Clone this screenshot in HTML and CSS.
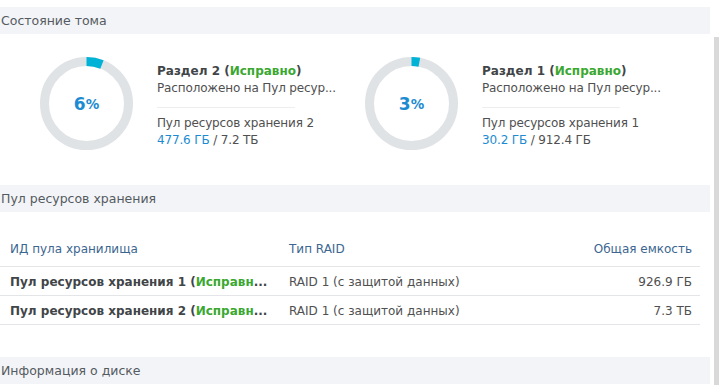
FILE: index.html
```html
<!DOCTYPE html>
<html lang="ru">
<head>
<meta charset="utf-8">
<link rel="stylesheet" href="styles.css">
</head>
<body>
<div class="page">
  <main class="content">
    <div class="section-header">Состояние тома</div>
    <div class="volumes">
      <div class="volume">
        <div class="ring">
          <svg width="93" height="93" viewBox="0 0 93 93">
            <circle cx="46.5" cy="46.5" r="42" fill="none" stroke="#e0e3e6" stroke-width="9"/>
            <circle cx="46.5" cy="46.5" r="42" fill="none" stroke="#00b3d6" stroke-width="9" stroke-dasharray="15.8 300" transform="rotate(-90 46.5 46.5)"/>
          </svg>
          <div class="pct">6<span class="pct-sign">%</span></div>
        </div>
        <div class="info">
          <div class="title">Раздел 2 (<span class="ok">Исправно</span>)</div>
          <div class="line">Расположено на Пул ресур...</div>
          <div class="divider"></div>
          <div class="line">Пул ресурсов хранения 2</div>
          <div class="line"><span class="used">477.6 ГБ</span> / 7.2 ТБ</div>
        </div>
      </div>
      <div class="volume">
        <div class="ring">
          <svg width="93" height="93" viewBox="0 0 93 93">
            <circle cx="46.5" cy="46.5" r="42" fill="none" stroke="#e0e3e6" stroke-width="9"/>
            <circle cx="46.5" cy="46.5" r="42" fill="none" stroke="#00b3d6" stroke-width="9" stroke-dasharray="7.9 300" transform="rotate(-90 46.5 46.5)"/>
          </svg>
          <div class="pct">3<span class="pct-sign">%</span></div>
        </div>
        <div class="info">
          <div class="title">Раздел 1 (<span class="ok">Исправно</span>)</div>
          <div class="line">Расположено на Пул ресур...</div>
          <div class="divider"></div>
          <div class="line">Пул ресурсов хранения 1</div>
          <div class="line"><span class="used">30.2 ГБ</span> / 912.4 ГБ</div>
        </div>
      </div>
    </div>
    <div class="section-header">Пул ресурсов хранения</div>
    <table class="pools">
      <thead>
        <tr>
          <th class="c1">ИД пула хранилища</th>
          <th class="c2">Тип RAID</th>
          <th class="c3">Общая емкость</th>
        </tr>
      </thead>
      <tbody>
        <tr>
          <td class="c1 name">Пул ресурсов хранения 1 (<span class="ok">Исправн</span>...</td>
          <td class="c2">RAID 1 (с защитой данных)</td>
          <td class="c3">926.9 ГБ</td>
        </tr>
        <tr>
          <td class="c1 name">Пул ресурсов хранения 2 (<span class="ok">Исправн</span>...</td>
          <td class="c2">RAID 1 (с защитой данных)</td>
          <td class="c3">7.3 ТБ</td>
        </tr>
      </tbody>
    </table>
    <div class="section-header">Информация о диске</div>
  </main>
  <div class="scrollbar"></div>
</div>
</body>
</html>
```

FILE: styles.css
```css
html, body {
  margin: 0;
  padding: 0;
  background: #ffffff;
  overflow: hidden;
}
body {
  font-family: "DejaVu Sans", Verdana, sans-serif;
  font-size: 12px;
  color: #505050;
}
.page {
  display: flex;
  align-items: flex-start;
}
.content {
  width: 710px;
  flex: none;
}
.scrollbar {
  flex: none;
  width: 5px;
  height: 360px;
  margin-left: 4px;
  margin-top: 37px;
  background: #d9d9d9;
}
.section-header {
  margin-top: 7px;
  height: 27px;
  line-height: 28px;
  background: #f2f4f7;
  font-size: 12.5px;
  color: #555a5f;
  padding-left: 1px;
}
.volumes {
  display: flex;
  height: 144px;
  padding-top: 23px;
  box-sizing: border-box;
}
.volume {
  width: 325px;
  display: flex;
  padding-left: 40px;
  box-sizing: border-box;
}
.ring {
  position: relative;
  width: 93px;
  height: 93px;
  flex: none;
}
.ring svg {
  display: block;
}
.pct {
  position: absolute;
  inset: 0;
  display: flex;
  align-items: center;
  justify-content: center;
  font-weight: bold;
  font-size: 17px;
  color: #1d8bd1;
}
.pct-sign {
  font-size: 13.5px;
}
.info {
  margin-left: 24px;
  padding-top: 5px;
  white-space: nowrap;
}
.title {
  font-weight: bold;
  font-size: 12px;
  color: #414548;
  line-height: 18px;
}
.ok {
  color: #3aa830;
  font-weight: bold;
}
.line {
  line-height: 17px;
  letter-spacing: -0.15px;
}
.divider {
  height: 1px;
  background: #eceef0;
  margin: 10px 0 7px;
  width: 138px;
}
.used {
  color: #1d8bd1;
}
.pools {
  width: 700px;
  border-collapse: collapse;
}
.pools th {
  font-weight: normal;
  color: #3c6690;
  height: 44px;
  vertical-align: bottom;
  padding: 0 0 10px 0;
  text-align: left;
  border-bottom: 1px solid #e3e5e8;
}
.pools td {
  height: 27px;
  padding: 1px 0 0 0;
  border-bottom: 1px solid #e3e5e8;
  white-space: nowrap;
}
.pools .c1 {
  padding-left: 10px;
  width: 279px;
}
.pools .c3 {
  text-align: right;
  padding-right: 8px;
}
.pools .name {
  font-weight: bold;
  color: #414548;
}
.pools + .section-header {
  margin-top: 32px;
}
```
